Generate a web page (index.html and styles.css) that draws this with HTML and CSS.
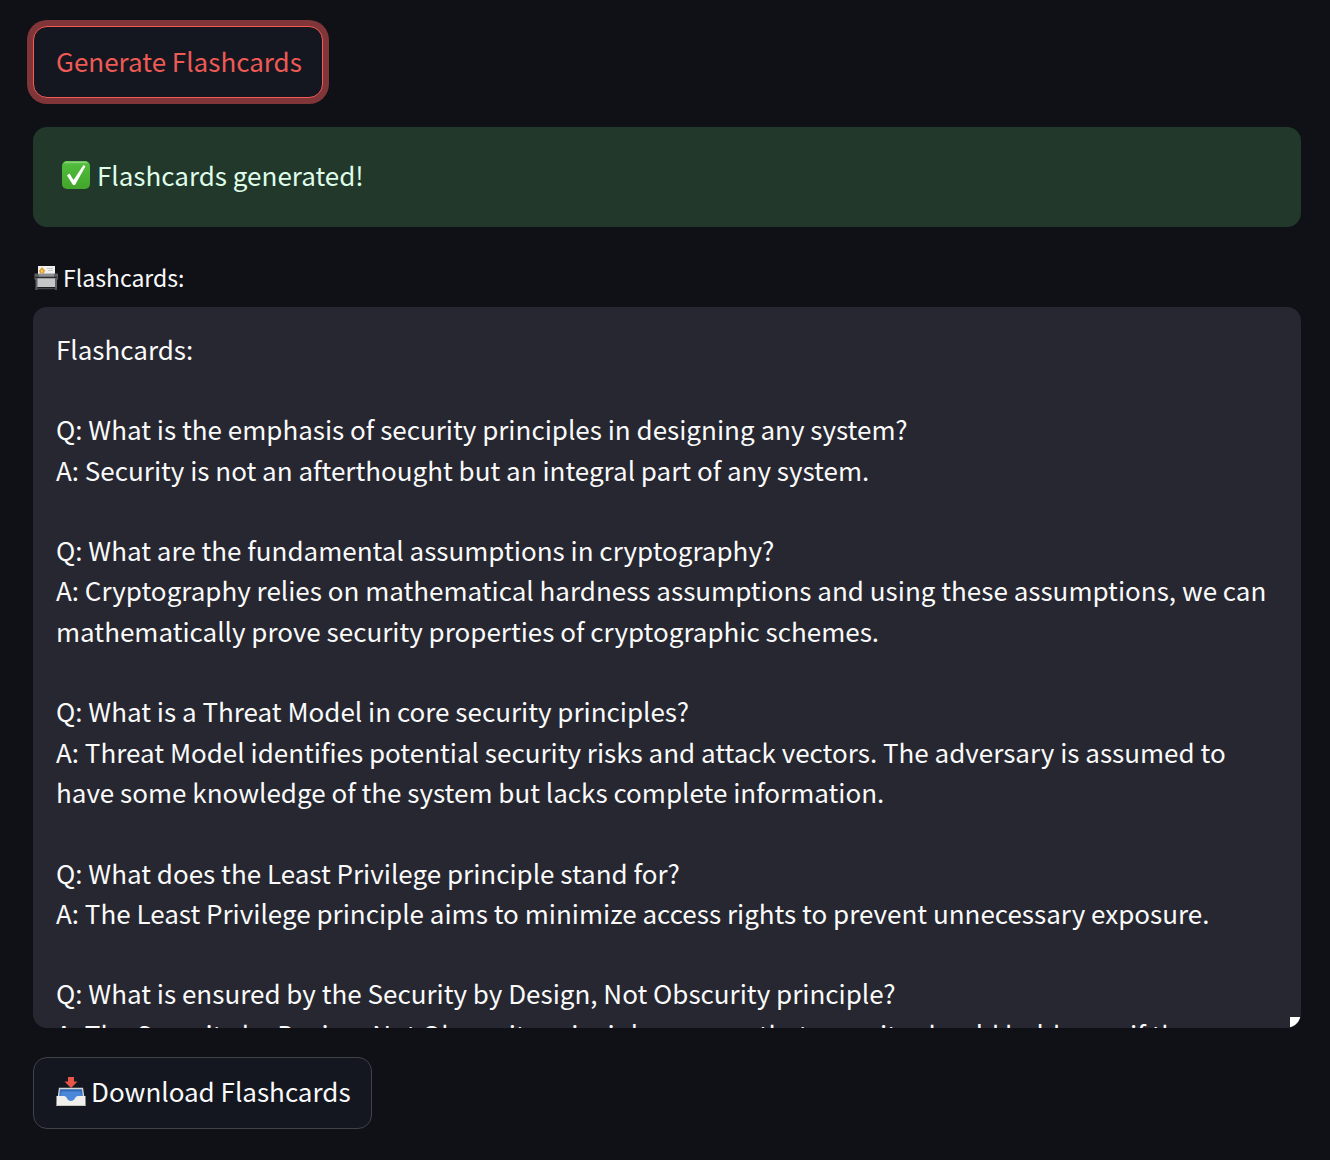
FILE: index.html
```html
<!DOCTYPE html>
<html lang="en">
<head>
<meta charset="utf-8">
<meta name="viewport" content="width=device-width, initial-scale=1">
<title>Flashcards</title>
<link rel="stylesheet" href="styles.css">
</head>
<body>
<main class="page">
  <button type="button" class="button button-active">Generate Flashcards</button>

  <div class="alert" role="status">
    <svg class="icon" viewBox="0 0 30 30" aria-hidden="true">
      <defs>
        <linearGradient id="check-fill" x1="0" y1="0" x2="0" y2="1">
          <stop offset="0" stop-color="#6cc85a"/>
          <stop offset=".15" stop-color="#4fbb3a"/>
          <stop offset="1" stop-color="#43a52b"/>
        </linearGradient>
      </defs>
      <rect x="1" y="1" width="28" height="28" rx="5" fill="url(#check-fill)"/>
      <path d="M4 2.5h22" stroke="#86d474" stroke-width="1.200" stroke-linecap="round"/>
      <path d="M6 15.500l2.500-2 4 6.500L22.500 5l2 1.200L14 25h-2z" fill="#fff"/>
    </svg>
    <span>Flashcards generated!</span>
  </div>

  <div class="field">
    <label class="label" for="cards">
      <svg class="icon icon-small" viewBox="0 0 26 26" aria-hidden="true">
        <path d="M5 1h17v11H5z" fill="#f1f1ef"/>
        <path d="M14 3.500h6M15 5.500h5" stroke="#c6c7c8"/>
        <path d="M9 2l3.200 3.700-1.500 2.800h-3.400L6 5.800z" fill="#e2a12a"/>
        <path d="M9 5v2.500" stroke="#fff1b0"/>
        <path d="M2 9h22v6H2z" fill="#4b4e50"/>
        <path d="M5.500 8.500h16V12h-16z" fill="#8d9092"/>
        <path d="M1.500 8.500h3.500v6H1.500zM21.500 8.500h3.500v6h-3.500z" fill="#5d6062"/>
        <path d="M4 13h18v9H4z" fill="#c4c6c7"/>
        <path d="M2 12.500h22" stroke="#292b2d" stroke-width="1.500"/>
        <path d="M3.500 13v12M23 13v12" stroke="#606365" stroke-width="2"/>
        <path d="M2 23.500h22" stroke="#45484a" stroke-width="1.500"/>
      </svg>
      <span>Flashcards:</span>
    </label>
    <textarea class="cards" id="cards" spellcheck="false">Flashcards:

Q: What is the emphasis of security principles in designing any system?
A: Security is not an afterthought but an integral part of any system.

Q: What are the fundamental assumptions in cryptography?
A: Cryptography relies on mathematical hardness assumptions and using these assumptions, we can mathematically prove security properties of cryptographic schemes.

Q: What is a Threat Model in core security principles?
A: Threat Model identifies potential security risks and attack vectors. The adversary is assumed to have some knowledge of the system but lacks complete information.

Q: What does the Least Privilege principle stand for?
A: The Least Privilege principle aims to minimize access rights to prevent unnecessary exposure.

Q: What is ensured by the Security by Design, Not Obscurity principle?
A: The Security by Design, Not Obscurity principle ensures that security should hold even if the</textarea>
  </div>

  <button type="button" class="button">
    <svg class="icon" viewBox="0 0 30 30" aria-hidden="true">
      <defs>
        <linearGradient id="tray-fill" x1="0" y1="0" x2="0" y2="1">
          <stop offset="0" stop-color="#2f64ae"/>
          <stop offset="1" stop-color="#5796e8"/>
        </linearGradient>
      </defs>
      <path d="M3.500 11.500h23L28.500 26h-27z" fill="url(#tray-fill)" stroke="#d5d8da" stroke-width="1.300"/>
      <path d="M6 14.500h18L26 20v5H4v-5z" fill="#4b88da"/>
      <path d="M.5 19h7.500c3 0 3 5 7 5s4-5 7-5h7.500v10H.5z" fill="#f0efec"/>
      <path d="M.5 28.500h29" stroke="#c9c8c4"/>
      <path d="M12 0h6v4.500h3.500L15 11 8.500 4.500H12z" fill="#e8564a"/>
    </svg>
    <span>Download Flashcards</span>
  </button>
</main>
</body>
</html>
```
FILE: styles.css
```css
* {
  box-sizing: border-box;
}

body {
  margin: 0;
  background: #0f1116;
  color: #fafafa;
  font-family: "Noto Sans CJK SC", "Noto Sans", sans-serif;
  font-size: 26px;
  line-height: 1.55;
}

.page {
  display: flex;
  flex-direction: column;
  align-items: flex-start;
  gap: 29px;
  padding: 26px 29px 31px 33px;
}

.button {
  display: flex;
  align-items: center;
  gap: 5px;
  min-height: 72px;
  padding: 0 20px 2px 22px;
  border: 1px solid #41434a;
  border-radius: 14px;
  background: #141720;
  color: inherit;
  font: inherit;
  cursor: pointer;
}

.button-active {
  border-color: #f65a54;
  color: #ee5a54;
  box-shadow: 0 0 0 6px #803638;
}

.alert {
  display: flex;
  align-items: center;
  gap: 6px;
  width: 100%;
  min-height: 100px;
  padding: 26px 28px 30px;
  border-radius: 14px;
  background: #22382b;
  color: #dffde9;
}

.field {
  display: flex;
  flex-direction: column;
  gap: 11px;
  width: 100%;
  padding-top: 4px;
}

.label {
  display: flex;
  align-items: center;
  gap: 4px;
  font-size: 23px;
}

.icon {
  flex: none;
  width: 30px;
  height: 30px;
}

.icon-small {
  width: 26px;
  height: 26px;
}

.cards {
  display: block;
  width: 100%;
  height: 721px;
  padding: 22px 23px;
  border: 0;
  border-radius: 14px;
  outline: 0;
  background: #262730;
  color: inherit;
  font: inherit;
  resize: vertical;
}

.cards::-webkit-scrollbar {
  width: 11px;
  background: transparent;
}

/* Grip follows the rounded corner of the text area */
.cards::-webkit-resizer {
  background: radial-gradient(circle at -3px -3px, #fff 13px, transparent 14px) right bottom / 11px 11px no-repeat;
}
```
